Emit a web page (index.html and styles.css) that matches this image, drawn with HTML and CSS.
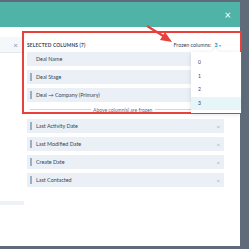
FILE: index.html
```html
<!DOCTYPE html>
<html lang="en">
  <head>
    <meta charset="UTF-8" />
    <meta name="viewport" content="width=device-width, initial-scale=1.0" />
    <title>Edit columns</title>
    <link rel="stylesheet" href="styles.css">
  </head>
  <body>
    <div class="modal">
      <div class="modal-header">
        <span class="header-close">&times;</span>
      </div>
      <div class="modal-body">
        <div class="left-panel">
          <div class="search-box"><span class="search-clear">&times;</span></div>
          <div class="left-foot"></div>
        </div>
        <div class="right-panel">
          <div class="panel-head">
            <span class="panel-title">Selected columns (7)</span>
            <span class="frozen-select">Frozen columns: <b>3</b> <i class="caret">&#9662;</i></span>
          </div>
          <div class="column-list">
            <div class="column-row"><span class="handle none"></span>Deal Name</div>
            <div class="column-row"><span class="handle"></span>Deal Stage</div>
            <div class="column-row"><span class="handle"></span>Deal &rarr; Company (Primary)</div>
            <div class="frozen-line"><span>Above column(s) are frozen</span></div>
            <div class="column-row"><span class="handle"></span>Last Activity Date<span class="remove">&times;</span></div>
            <div class="column-row"><span class="handle"></span>Last Modified Date<span class="remove">&times;</span></div>
            <div class="column-row"><span class="handle"></span>Create Date<span class="remove">&times;</span></div>
            <div class="column-row"><span class="handle"></span>Last Contacted<span class="remove">&times;</span></div>
          </div>
        </div>
      </div>
    </div>

    <!-- annotation overlays -->
    <div class="highlight-box"></div>
    <svg class="arrow" width="40" height="30" viewBox="0 0 40 30">
      <line x1="2" y1="2" x2="20" y2="13" stroke="#e8403a" stroke-width="2.2" />
      <polygon points="27,18 15,16 20,8" fill="#e8403a" />
    </svg>

    <ul class="frozen-menu">
      <li>0</li>
      <li>1</li>
      <li>2</li>
      <li class="active">3</li>
    </ul>
  </body>
</html>
```

FILE: styles.css
```css
body {
  margin: 0;
  width: 249px;
  height: 249px;
  overflow: hidden;
  background-color: #5f6b79;
  font-family: Lato, "Open Sans", sans-serif;
  color: #33475b;
  position: relative;
}
.modal {
  width: 240px;
  height: 244px;
  margin-top: 2px;
  background-color: #fff;
  display: flex;
  flex-direction: column;
}
.modal-header {
  height: 25px;
  background-color: #4fb4a7;
  display: flex;
  align-items: center;
  justify-content: flex-end;
  padding-right: 9px;
}
.header-close {
  color: #fff;
  font-size: 11px;
  line-height: 1;
}
.modal-body {
  flex: 1;
  display: flex;
}
.left-panel {
  width: 22px;
  padding-top: 10px;
  display: flex;
  flex-direction: column;
}
.search-box {
  height: 15px;
  background-color: #f5f8fa;
  border-bottom: 1px solid #e3e9ef;
  display: flex;
  align-items: center;
  justify-content: flex-end;
  padding-right: 4px;
}
.search-clear {
  color: #7c98b6;
  font-size: 8px;
  line-height: 1;
}
.left-foot {
  margin-top: 148px;
  width: 24px;
  height: 4px;
  background-color: #eef2f6;
}
.right-panel {
  width: 197px;
  padding-left: 5px;
  padding-top: 10px;
}
.panel-head {
  height: 15px;
  display: flex;
  align-items: center;
  justify-content: space-between;
  padding-right: 3px;
}
.panel-title {
  font-size: 4.8px;
  font-weight: 700;
  text-transform: uppercase;
  letter-spacing: 0.2px;
}
.frozen-select {
  font-size: 5.3px;
  color: #33475b;
}
.frozen-select b {
  color: #0091ae;
  font-weight: 700;
  margin-left: 2px;
}
.caret {
  font-style: normal;
  color: #7c98b6;
  font-size: 4px;
}
.column-list {
  display: flex;
  flex-direction: column;
  gap: 4px;
}
.column-row {
  height: 14px;
  background-color: #eaf0f6;
  display: flex;
  align-items: center;
  font-size: 5.4px;
  padding-left: 3px;
}
.handle {
  width: 2px;
  height: 8px;
  background-color: #99afc4;
  margin-right: 4px;
}
.handle.none {
  background-color: transparent;
}
.remove {
  margin-left: auto;
  margin-right: 4px;
  color: #99afc4;
  font-size: 6px;
}
.frozen-line {
  height: 7px;
  padding: 0 0 2px 3px;
  display: flex;
  align-items: center;
  font-size: 5px;
  color: #516f90;
}
.frozen-line::before,
.frozen-line::after {
  content: "";
  flex: 1;
  height: 1.5px;
  background-color: #cbd6e2;
}
.frozen-line::before {
  flex: 0 0 61px;
}
.frozen-line span {
  padding: 0 3px 0 2px;
}
.highlight-box {
  position: absolute;
  left: 22px;
  top: 31px;
  width: 216px;
  height: 79px;
  border: 2px solid #e8403a;
}
.arrow {
  position: absolute;
  left: 145px;
  top: 24px;
}
.frozen-menu {
  position: absolute;
  left: 191px;
  top: 52px;
  width: 50px;
  margin: 0;
  padding: 4px 0 3px;
  list-style: none;
  background-color: #fff;
  box-shadow: 0 1px 4px rgba(45, 62, 80, 0.18);
  font-size: 5px;
}
.frozen-menu::before {
  content: "";
  position: absolute;
  top: -3px;
  left: 22px;
  width: 5px;
  height: 5px;
  background-color: #fff;
  transform: rotate(45deg);
  box-shadow: -1px -1px 1px rgba(45, 62, 80, 0.08);
}
.frozen-menu li {
  height: 13.5px;
  line-height: 13.5px;
  padding-left: 7px;
}
.frozen-menu li.active {
  background-color: #e5f5f8;
}
```
